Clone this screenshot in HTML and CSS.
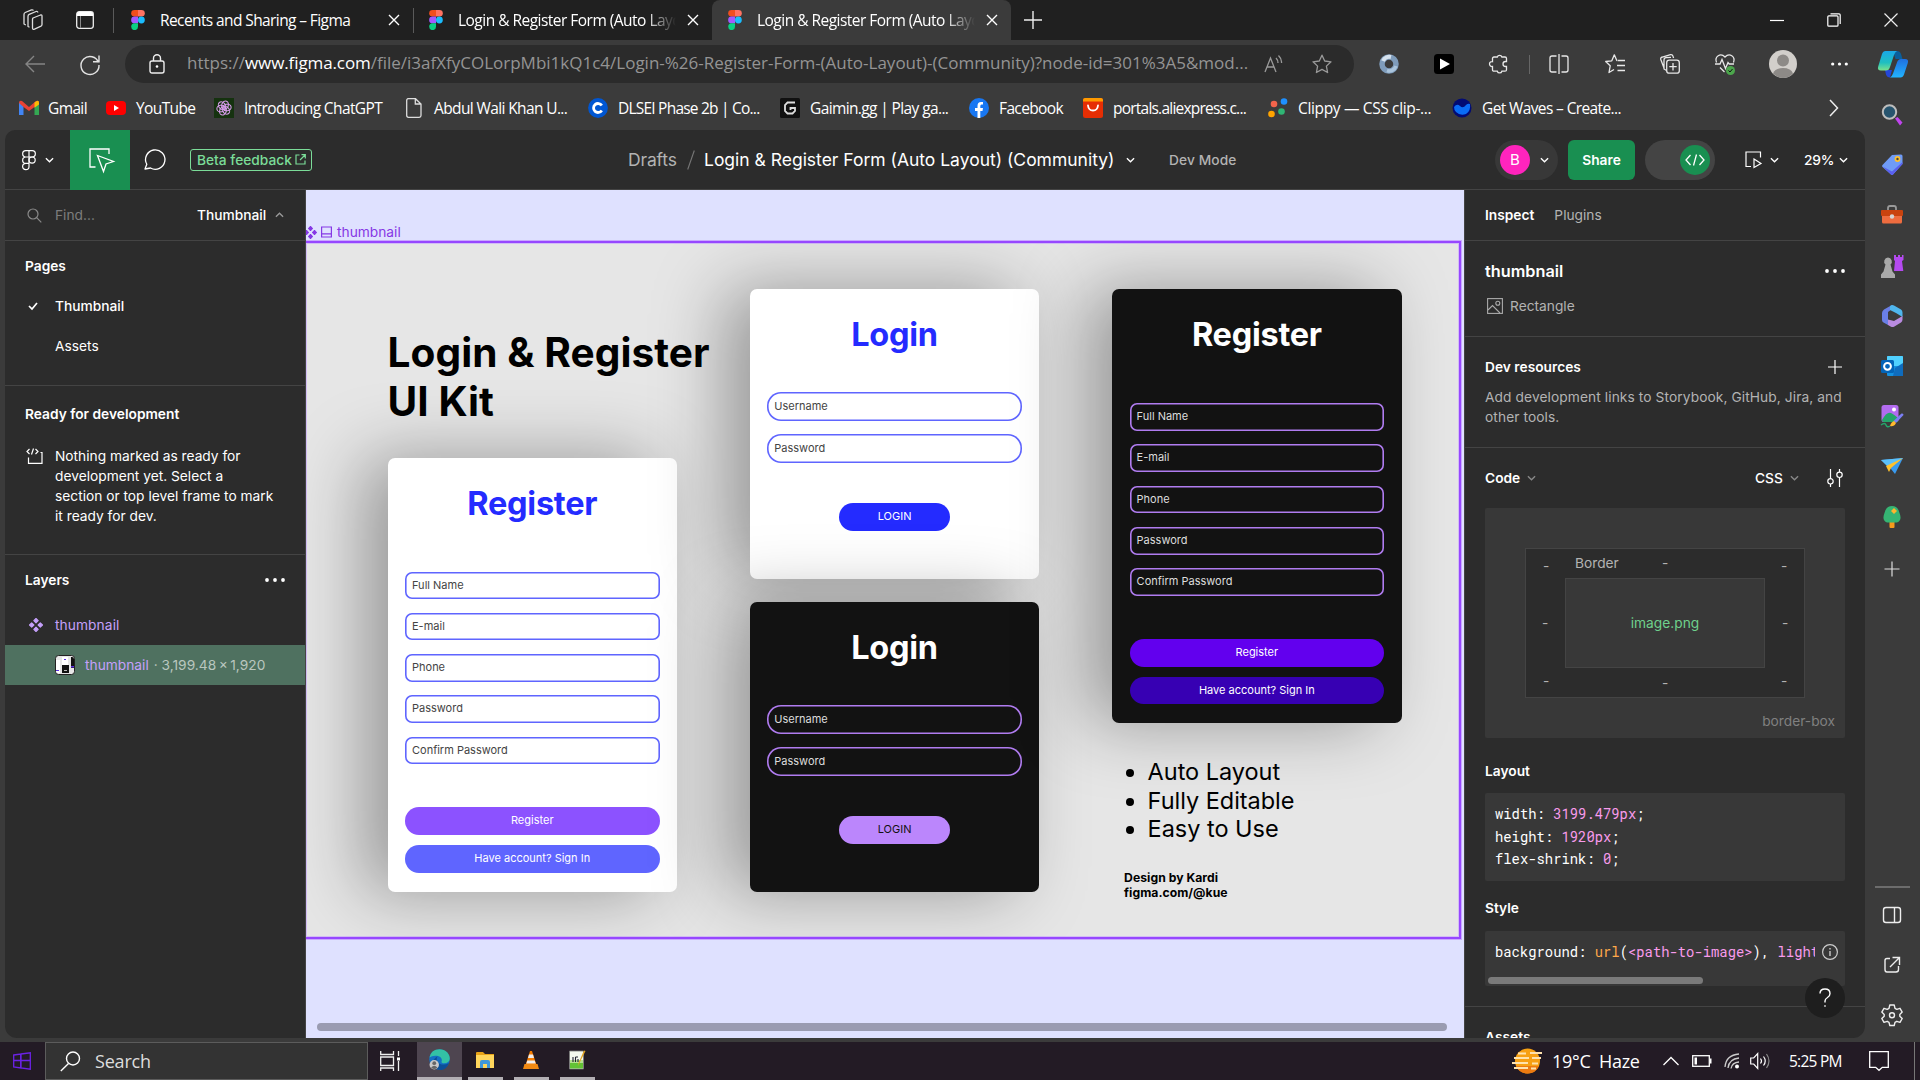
FILE: index.html
```html
<!DOCTYPE html>
<html lang="en">
<head>
<meta charset="utf-8">
<title>Login &amp; Register Form (Auto Layout) (Community) – Figma</title>
<link rel="stylesheet" href="styles.css">
</head>
<body>
<svg class="defs" width="0" height="0" aria-hidden="true">
  <symbol id="figma" viewBox="0 0 14 20"><path d="M3.500 0H7v6.600H3.500a3.300 3.300 0 0 1 0-6.600z" fill="#f24e1e"/><path d="M7 0h3.500a3.300 3.300 0 0 1 0 6.600H7z" fill="#ff7262"/><path d="M3.500 6.600H7v6.700H3.500a3.300 3.300 0 0 1 0-6.700z" fill="#a259ff"/><circle cx="10.400" cy="10" r="3.400" fill="#1abcfe"/><path d="M3.500 13.300H7v3.300a3.400 3.400 0 1 1-3.500-3.300z" fill="#0acf83"/></symbol>
  <symbol id="x" viewBox="0 0 12 12"><path d="M1 1l10 10M11 1L1 11" stroke="currentColor" stroke-width="1.400" fill="none"/></symbol>
  <symbol id="down" viewBox="0 0 10 6"><path d="M1 1l4 4 4-4" stroke="currentColor" stroke-width="1.500" fill="none"/></symbol>
  <symbol id="dots" viewBox="0 0 20 4"><circle cx="2" cy="2" r="1.900"/><circle cx="10" cy="2" r="1.900"/><circle cx="18" cy="2" r="1.900"/></symbol>
  <symbol id="comp" viewBox="0 0 14 14"><path d="M7 .5l2.200 2.200L7 4.900 4.800 2.700zM7 9.100l2.200 2.200L7 13.500l-2.200-2.200zM2.700 4.800L4.900 7 2.700 9.200.5 7zM11.300 4.800L13.500 7l-2.200 2.200L9.100 7z" fill="currentColor" stroke="currentColor" stroke-width="1.100" stroke-linejoin="round"/></symbol>
</svg>

<header class="tabstrip">
  <svg class="ic-work" viewBox="0 0 22 22"><g fill="none" stroke="#ddd" stroke-width="1.300" stroke-linejoin="round"><path d="M11 9l7.500-3q1.500-.4 1.500 1v8.500q0 1.200-1 1.700l-6.500 3q-2 .6-2-1.200v-8.500q0-1 .5-1.500z"/><path d="M7.500 18.300L6 17.500V7.500q0-1.500 1.200-2.100L14 2.500q1.500-.5 2 1M3.800 16L2 15V5.500Q2 4 3.200 3.500L9.500.9q1.300-.4 2 .6"/></g></svg>
  <svg class="ic-act" viewBox="0 0 18 18"><rect x=".7" y=".7" width="16.600" height="16.600" rx="2.500" fill="none" stroke="#eee" stroke-width="1.300"/><path d="M1 2.500Q1 1 2.500 1h13Q17 1 17 2.500V5H1z" fill="#fff"/><path d="M4.500 5v12" stroke="#888"/></svg>
  <i class="tabline"></i>
  <div class="tab t1"><svg class="fig"><use href="#figma"/></svg><span class="tt">Recents and Sharing – Figma</span><svg class="cx"><use href="#x"/></svg></div>
  <i class="tabline"></i>
  <div class="tab t2"><svg class="fig"><use href="#figma"/></svg><span class="tt fade">Login &amp; Register Form (Auto Layout)</span><svg class="cx"><use href="#x"/></svg></div>
  <div class="tab t3"><svg class="fig"><use href="#figma"/></svg><span class="tt fade">Login &amp; Register Form (Auto Layout)</span><svg class="cx"><use href="#x"/></svg></div>
  <svg class="newtab" viewBox="0 0 18 18"><path d="M9 0v18M0 9h18" stroke="#eee" stroke-width="1.400"/></svg>
  <div class="win">
    <svg width="14" height="14"><path d="M0 7.500h14" stroke="#fff" stroke-width="1.200"/></svg>
    <svg width="14" height="14" viewBox="0 0 14 14"><g fill="none" stroke="#fff" stroke-width="1.200"><rect x=".8" y="2.800" width="10.200" height="10.400" rx="1"/><path d="M3.500.8H12q1.200 0 1.200 1.200v9"/></g></svg>
    <svg width="14" height="14"><path d="M.5.5l13 13M13.500.5l-13 13" stroke="#eee" stroke-width="1.200"/></svg>
  </div>
</header>

<div class="toolbar">
  <svg class="back" viewBox="0 0 20 18"><path d="M20 9H1M9 1L1 9l8 8" fill="none" stroke="#858585" stroke-width="1.400"/></svg>
  <svg class="reload" viewBox="0 0 20 20"><path d="M18.500 8.500A9 9 0 1 0 19 11M19 1.500v6.200h-6" fill="none" stroke="#e4e4e4" stroke-width="1.400"/></svg>
  <div class="omni">
    <svg class="lock" viewBox="0 0 16 20"><rect x="1" y="7" width="14" height="12" rx="2" fill="none" stroke="#eee" stroke-width="1.400"/><path d="M4.500 7V4.300a3.500 3.500 0 0 1 7 0V7" fill="none" stroke="#eee" stroke-width="1.400"/><circle cx="8" cy="12.500" r="1.300" fill="#fff"/></svg>
    <span class="url">https://<b>www.figma.com</b>/file/i3afXfyCOLorpMbi1kQ1c4/Login-%26-Register-Form-(Auto-Layout)-(Community)?node-id=301%3A5&amp;mod...</span>
    <svg class="read" viewBox="0 0 20 20"><path d="M1 18L6.500 4 12 18M3 13h7M12 4q2 2 2 5M14.500 1.500Q18 5 17.500 9" fill="none" stroke="#9a9a9a" stroke-width="1.300"/></svg>
    <svg class="star" viewBox="0 0 20 20"><path d="M10 1.200l2.700 5.800 6.300.8-4.600 4.300 1.200 6.400L10 15.400l-5.600 3.100 1.200-6.400L1 7.800 7.300 7z" fill="none" stroke="#9a9a9a" stroke-width="1.300" stroke-linejoin="round"/></svg>
  </div>
  <div class="exts">
    <svg width="20" height="20" viewBox="0 0 20 20"><circle cx="10" cy="10" r="7" fill="none" stroke="#7f9cbb" stroke-width="5.500"/><path d="M4 7a7 7 0 0 1 8-4" fill="none" stroke="#d6e2ee" stroke-width="4"/><path d="M17 12a7 7 0 0 1-9 4.500" fill="none" stroke="#aac4dc" stroke-width="3.500"/></svg>
    <svg width="20" height="20" viewBox="0 0 20 20"><rect width="20" height="20" rx="3.500" fill="#000"/><path d="M6 4.500l10 5.500-10 5.500z" fill="#fff"/></svg>
    <svg width="20" height="20" viewBox="0 0 20 20"><path d="M5 3h3.300a2.400 2.400 0 0 1 4.600 0H16q1.500 0 1.500 1.500v3h-1a2.500 2.500 0 0 0 0 5h1v3.200q0 1.500-1.500 1.500h-3.100a2.400 2.400 0 0 1-4.600 0H5q-1.500 0-1.500-1.500v-3.200a2.500 2.500 0 1 1 0-4.900V4.500Q3.500 3 5 3z" fill="none" stroke="#e8e8e8" stroke-width="1.300"/></svg>
    <i class="vline"></i>
    <svg width="20" height="20" viewBox="0 0 20 20"><path d="M7.500 2H3Q1 2 1 4v12q0 2 2 2h4.500M12.500 2H17q2 0 2 2v12q0 2-2 2h-4.500M10 0v20" fill="none" stroke="#e8e8e8" stroke-width="1.300"/></svg>
    <svg width="20" height="20" viewBox="0 0 20 20"><path d="M12.500 6.500h-.7L9.300.8 6.800 6.800.7 7.500l4.500 4.300-1.200 6.700 5-3M13 6.500h7M12 11.500h8M12.500 16.500H20" fill="none" stroke="#e8e8e8" stroke-width="1.300" stroke-linejoin="round"/></svg>
    <svg width="20" height="20" viewBox="0 0 20 20"><g fill="none" stroke="#e8e8e8" stroke-width="1.300"><rect x="6.700" y="6.200" width="12.600" height="13" rx="2.500"/><path d="M13 9v7.500M9.300 12.700h7.400M4 14L.8 5.500Q.3 3.500 2.300 3L10.500.6Q12.500.3 13 2.200L13.600 4M6.500 16.500L4 15V6Q4 3.800 6 3.600l5-.2"/></g></svg>
    <svg width="20" height="20" viewBox="0 0 20 20"><path d="M9.500 18L5 13.500M1.500 8.500C-.8 2.500 5.500-1.800 10 3c4.500-4.800 10.800-.5 8.500 5.500M0 10h5l2-4.500 3.500 9 2.500-6 1.200 1.500H19" fill="none" stroke="#e8e8e8" stroke-width="1.300"/><circle cx="15.500" cy="16.500" r="4.500" fill="#4ca64c"/><path d="M13.500 16.500l1.500 1.500 2.500-3" stroke="#111" fill="none"/></svg>
    <svg width="28" height="28" viewBox="0 0 28 28"><circle cx="14" cy="14" r="14" fill="#d2cfcb"/><circle cx="14" cy="10.500" r="6" fill="#8d8a87"/><path d="M4 23.500q2-5.500 10-5.500t10 5.500q-4.300 4.500-10 4.500T4 23.500z" fill="#8d8a87"/></svg>
    <svg width="17" height="4" fill="#fff"><use href="#dots"/></svg>
    <svg width="30" height="27" viewBox="0 0 30 27"><defs><linearGradient id="cpa" x1="0" y1="0" x2="0" y2="1"><stop offset="0" stop-color="#1aa7e8"/><stop offset=".6" stop-color="#1fbfc0"/><stop offset="1" stop-color="#7be28b"/></linearGradient><linearGradient id="cpb" x1="0" y1="0" x2="0" y2="1"><stop offset="0" stop-color="#1f6fe0"/><stop offset="1" stop-color="#22b4ff"/></linearGradient></defs><path d="M15 0h4q3 0 4 3l1.500 5h-7z" fill="#0a5f9c"/><path d="M7 19h7l-2 7.500q-3 0-4-3z" fill="#2447d8"/><path d="M7.500 0H19q-2 1-3 4l-4 12q-1 3.500-4 3.500H3q-4 0-2.800-4L4 3q1-3 3.500-3z" fill="url(#cpa)"/><path d="M22.500 26.500H12q2-1 3-4l4-11q1-3.500 4-3.500h4q4 0 2.800 4L26 23.500q-1 3-3.500 3z" fill="url(#cpb)"/></svg>
  </div>
</div>

<nav class="marks">
  <a><svg viewBox="0 0 20 20"><path d="M0 4v13h4.500V8z" fill="#4285f4"/><path d="M20 4v13h-4.500V8z" fill="#34a853"/><path d="M0 5q0-3 3-2l7 6 7-6q3-1 3 2l-4.500 4L10 13 4.500 9z" fill="#ea4335"/><path d="M15.500 4.500Q20 1 20 5v1.500l-4.500 3.200z" fill="#fbbc04"/></svg><span>Gmail</span></a>
  <a><svg viewBox="0 0 20 20"><rect y="3" width="20" height="14" rx="4" fill="#f00"/><path d="M8 7l5 3-5 3z" fill="#fff"/></svg><span>YouTube</span></a>
  <a><svg viewBox="0 0 20 20"><rect width="20" height="20" fill="#15320f"/><g fill="none" stroke="#d59be8" stroke-width="1.100"><ellipse cx="10" cy="7" rx="3.300" ry="4.200" transform="rotate(20 10 10)"/><ellipse cx="10" cy="7" rx="3.300" ry="4.200" transform="rotate(80 10 10)"/><ellipse cx="10" cy="7" rx="3.300" ry="4.200" transform="rotate(140 10 10)"/><ellipse cx="10" cy="7" rx="3.300" ry="4.200" transform="rotate(200 10 10)"/><ellipse cx="10" cy="7" rx="3.300" ry="4.200" transform="rotate(260 10 10)"/><ellipse cx="10" cy="7" rx="3.300" ry="4.200" transform="rotate(320 10 10)"/></g></svg><span>Introducing ChatGPT</span></a>
  <a><svg viewBox="0 0 20 20"><path d="M3.500.7h8L17 6v11.500q0 1.800-1.800 1.800H4.500q-1.800 0-1.800-1.800V2.500Q2.700.7 4.500.7M11.300.8V6H17" fill="none" stroke="#ddd" stroke-width="1.300"/></svg><span>Abdul Wali Khan U...</span></a>
  <a><svg viewBox="0 0 20 20"><circle cx="10" cy="10" r="9.900" fill="#0056d2"/><path d="M13.800 7.500a4.500 4.500 0 1 0 0 5" fill="none" stroke="#fff" stroke-width="2.800"/></svg><span class="narrow">DLSEI Phase 2b | Co...</span></a>
  <a><svg viewBox="0 0 20 20"><rect width="20" height="20" rx="1.500" fill="#111"/><path d="M15 4.500H7.500L5 7v6l2.500 2.500h5L15 13v-3h-4.500v2" fill="none" stroke="#ddd" stroke-width="1.800"/></svg><span>Gaimin.gg | Play ga...</span></a>
  <a><svg viewBox="0 0 20 20"><circle cx="10" cy="10" r="10" fill="#1877f2"/><path d="M8.500 20v-7H6v-3h2.500V8q0-4 3.500-4h2v2.500h-1.500Q11.300 6.500 11.300 8v2H14l-.5 3h-2.200v7z" fill="#fff"/></svg><span>Facebook</span></a>
  <a><svg viewBox="0 0 20 20"><rect width="20" height="20" rx="2.500" fill="#e62e04"/><path d="M0 3.500V2q0-2 2-2h16q2 0 2 2v1.500z" fill="#ff9a00"/><path d="M5 7.500q.5 5 5 5t5-5" fill="none" stroke="#fff" stroke-width="1.800" stroke-linecap="round"/></svg><span class="narrow">portals.aliexpress.c...</span></a>
  <a><svg viewBox="0 0 20 20"><circle cx="6" cy="6" r="3.300" fill="#f2644b"/><circle cx="3.500" cy="16" r="3.300" fill="#ffa400"/><circle cx="16" cy="3.500" r="3.300" fill="#1e90ff"/><circle cx="13.500" cy="13.500" r="3.300" fill="#2fb574"/></svg><span class="wide">Clippy — CSS clip-...</span></a>
  <a><svg viewBox="0 0 20 20"><circle cx="10" cy="10" r="9.500" fill="#020b73"/><path d="M2 9q3-4 6-1t6-1q2-2 4-1 1 7-4 10-6 2-10-2-2-2-2-5z" fill="#0a6cf5"/></svg><span>Get Waves – Create...</span></a>
  <svg class="more" width="10" height="18" viewBox="0 0 10 18"><path d="M1 1l7.500 8L1 17" fill="none" stroke="#eee" stroke-width="1.500"/></svg>
</nav>

<main class="middle">
<section class="app">
  <div class="head">
    <svg class="flogo" viewBox="0 0 14 20" fill="none" stroke="#fff" stroke-width="1.200"><path d="M7 .7v15.800a3.200 3.200 0 1 1-3.200-3.200H7M7 .7H3.800a3.100 3.100 0 0 0 0 6.300H7M7 .7h3.200a3.100 3.100 0 0 1 0 6.300H7M7 7H3.800a3.100 3.100 0 0 0 0 6.300"/><circle cx="10.100" cy="10.100" r="3.100"/></svg>
    <svg class="ch"><use href="#down"/></svg>
    <div class="move"><svg width="26" height="26" viewBox="0 0 26 26" fill="none" stroke="#fff" stroke-width="1.300"><path d="M6.500 19H1V1h19v5"/><path d="M8.500 7.500l16 6-7.500 2.500-2.500 7.500z"/></svg></div>
    <svg class="cmt" viewBox="0 0 22 21"><path d="M1 20l1.800-4.700A9.700 9.700 0 1 1 6.500 19z" fill="none" stroke="#fff" stroke-width="1.300" stroke-linejoin="round"/></svg>
    <div class="beta"><span>Beta feedback</span><svg width="11" height="11" viewBox="0 0 11 11"><path d="M4.500 1H1v9h9V6.500M6.500.7h3.800v3.800M10 1L5 6" fill="none" stroke="#7bdc98" stroke-width="1.200"/></svg></div>
    <span class="drafts">Drafts</span><svg class="slash" viewBox="0 0 8 20"><path d="M7.300.5L.7 19.500" stroke="#777" stroke-width="1.100"/></svg>
    <span class="fname">Login &amp; Register Form (Auto Layout) (Community)</span><svg class="ch"><use href="#down"/></svg>
    <span class="devm">Dev Mode</span>
    <div class="user"><i>B</i><svg class="ch"><use href="#down"/></svg></div>
    <span class="share">Share</span>
    <div class="toggle"><i><svg width="20" height="12" viewBox="0 0 20 12"><path d="M5.500 1L1 6l4.500 5M14.500 1L19 6l-4.500 5M11.500.5l-3 11" fill="none" stroke="#fff" stroke-width="1.300"/></svg></i></div>
    <svg class="present" viewBox="0 0 17 17"><path d="M6 15.500H1V1h14.500v5.500M9 8l7 4.500L9 16.500z" fill="none" stroke="#fff" stroke-width="1.200"/></svg><svg class="ch"><use href="#down"/></svg>
    <span class="pct">29%</span><svg class="ch"><use href="#down"/></svg>
  </div>
  <div class="cols">
    <aside class="left">
      <div class="find"><svg width="15" height="15" viewBox="0 0 15 15"><circle cx="6" cy="6" r="5" fill="none" stroke="#8a8a8a" stroke-width="1.200"/><path d="M9.700 9.700l4.600 4.600" stroke="#8a8a8a" stroke-width="1.200"/></svg><span class="ph">Find...</span><span class="pg">Thumbnail</span><svg class="up"><use href="#down"/></svg></div>
      <div class="sec pages">
        <h4>Pages</h4>
        <div class="row cur"><svg class="tick" viewBox="0 0 10 8"><path d="M1 4l3 3 5-6" fill="none" stroke="#fff" stroke-width="1.700"/></svg>Thumbnail</div>
        <div class="row">Assets</div>
      </div>
      <div class="sec ready">
        <h4>Ready for development</h4>
        <div class="note"><svg width="18" height="16" viewBox="0 0 18 16" fill="none" stroke="#fff" stroke-width="1.200"><path d="M3.500 1L1 3.500 3.500 6M7.500.5L5.500 6.500M9.500 1L12 3.500 9.500 6"/><path d="M2.500 9.500v5.800h13.500V4.500h-1.500" /></svg><p>Nothing marked as ready for<br>development yet. Select a<br>section or top level frame to mark<br>it ready for dev.</p></div>
      </div>
      <div class="layers">
        <h4>Layers<svg width="20" height="4" fill="#fff"><use href="#dots"/></svg></h4>
        <div class="row comp"><svg class="cmp"><use href="#comp"/></svg>thumbnail</div>
        <div class="row sel"><svg class="thumb" viewBox="0 0 20 20"><rect x=".5" y=".5" width="19" height="19" rx="3" fill="#e6e6e6" stroke="#222"/><path d="M1 5h4v13H3q-2 0-2-2zM7 2h6v8H7z" fill="#fff"/><path d="M7 10h7v8H7zM16 2h1q2 0 2 2v9h-3z" fill="#111"/><path d="M16 11h3v1.500h-3zM1 15h3v1H1zM9 4h2v1H9z" fill="#5b2be0"/><path d="M9 15h3v1H9z" fill="#bbb"/></svg><span>thumbnail</span><em>·&nbsp;3,199.48&#8201;×&#8201;1,920</em></div>
      </div>
    </aside>

    <div class="canvas">
      <div class="flabel"><svg class="cmp"><use href="#comp"/></svg><svg width="11" height="12" viewBox="0 0 11 12"><path d="M.6 1h9.800v10H.6zM.6 7.800h9.800" fill="none" stroke="currentColor" stroke-width="1.200"/></svg><span>thumbnail</span></div>
      <div class="frame">
        <div class="c1">
          <h1>Login &amp; Register<br>UI Kit</h1>
          <div class="card reg">
            <h2>Register</h2>
            <div class="fields"><p>Full Name</p><p>E-mail</p><p>Phone</p><p>Password</p><p>Confirm Password</p></div>
            <div class="btns"><b>Register</b><b>Have account? Sign In</b></div>
          </div>
        </div>
        <div class="c2">
          <div class="card log"><h2>Login</h2><div class="fields"><p>Username</p><p>Password</p></div><b class="go">LOGIN</b></div>
          <div class="card log dark"><h2>Login</h2><div class="fields"><p>Username</p><p>Password</p></div><b class="go">LOGIN</b></div>
        </div>
        <div class="c3">
          <div class="card reg dark">
            <h2>Register</h2>
            <div class="fields"><p>Full Name</p><p>E-mail</p><p>Phone</p><p>Password</p><p>Confirm Password</p></div>
            <div class="btns"><b>Register</b><b>Have account? Sign In</b></div>
          </div>
          <ul><li>Auto Layout</li><li>Fully Editable</li><li>Easy to Use</li></ul>
          <div class="credit">Design by Kardi<br>figma.com/@kue</div>
        </div>
      </div>
      <i class="hscroll"></i>
    </div>

    <aside class="right">
      <div class="tabs"><b>Inspect</b><span>Plugins</span></div>
      <div class="obj"><div class="oname"><b>thumbnail</b><svg width="20" height="4" fill="#fff"><use href="#dots"/></svg></div>
        <div class="otype"><svg width="16" height="16" viewBox="0 0 16 16" fill="none" stroke="#aaa" stroke-width="1.100"><rect x=".6" y=".6" width="14.800" height="14.800"/><path d="M1 12l4.500-4.500 7.500 7.500"/><circle cx="10.800" cy="5.200" r="2"/></svg>Rectangle</div></div>
      <div class="devres"><h4>Dev resources<svg width="14" height="14" viewBox="0 0 14 14"><path d="M7 0v14M0 7h14" stroke="#fff" stroke-width="1.200"/></svg></h4><p>Add development links to Storybook, GitHub, Jira, and<br>other tools.</p></div>
      <div class="code">
        <div class="chead"><b>Code</b><svg class="ch"><use href="#down"/></svg><span>CSS</span><svg class="ch"><use href="#down"/></svg><svg class="sld" width="16" height="18" viewBox="0 0 16 18" fill="none" stroke="#fff" stroke-width="1.200"><path d="M3.500 0v9.500M3.500 15v3M12.500 0v3M12.500 8.500V18"/><circle cx="3.500" cy="12.300" r="2.700"/><circle cx="12.500" cy="5.800" r="2.700"/></svg></div>
        <div class="boxm">
          <div class="border"><div class="inner">image.png</div><span class="bl">Border</span><i class="d1">-</i><i class="d2">-</i><i class="d3">-</i><i class="d4">-</i><i class="d5">-</i><i class="d6">-</i><i class="d7">-</i><i class="d8">-</i></div>
          <span class="bb">border-box</span>
        </div>
        <h4>Layout</h4>
        <pre class="blk">width: <i>3199.479px</i>;
height: <i>1920px</i>;
flex-shrink: <i>0</i>;</pre>
        <h4 class="st">Style</h4>
        <div class="blk2"><pre>background: <u>url</u>(<i>&lt;path-to-image&gt;</i>), <i>lightgray</i></pre><svg width="18" height="18" viewBox="0 0 18 18"><circle cx="9" cy="9" r="7.400" fill="none" stroke="#ccc" stroke-width="1.200"/><path d="M9 8v5M9 5v1.500" stroke="#ccc" stroke-width="1.400"/></svg><i class="sb"></i></div>
      </div>
      <div class="assets"><h4>Assets</h4></div>
      <div class="help"><svg width="12" height="20" viewBox="0 0 12 20"><path d="M1 5.500Q1 1 6 1t5 4.500Q11 8 8.500 9.500T6 13v1.500M6 17.300v1.500" fill="none" stroke="#fff" stroke-width="1.400"/></svg></div>
    </aside>
  </div>
</section>

<aside class="edgebar">
  <svg viewBox="0 0 24 24"><circle cx="9.500" cy="9" r="6.700" fill="#27546e" stroke="#bdbdbd" stroke-width="2"/><path d="M15 15.500l2.500-1.500 5 5.500-2.500 3z" fill="#c044ee"/></svg>
  <svg viewBox="0 0 24 24"><path d="M12 2l9-.5q1.500 0 1.500 1.500v8L13 21.500q-1 1-2 0L2.500 14q-1-1 0-2z" fill="#6f9bf7"/><path d="M2.500 13.500l8.500 8q1 1 2 0l9.500-10.500V9L12 18.500z" fill="#5a5ff0"/><circle cx="17.500" cy="6" r="2.900" fill="#ffc02e"/><circle cx="17.500" cy="6" r="1.200" fill="#444"/></svg>
  <svg viewBox="0 0 24 24"><path d="M8 7V5q0-2 2-2h4q2 0 2 2v2" fill="none" stroke="#999" stroke-width="1.800"/><path d="M2 12h20v7q0 1.500-1.500 1.500h-17Q2 20.500 2 19z" fill="#ee6c3f"/><rect x="1" y="7" width="22" height="6" rx="1" fill="#c9430f"/><circle cx="12" cy="13.500" r="2.200" fill="#d5d5d5"/></svg>
  <svg viewBox="0 0 24 24"><path d="M14 1h2v2h2V1h2v2h2V1h1.500v5L22 7l1.300 10H14l1-10-1-1z" fill="#b44af0"/><path d="M8 3.500a4 4 0 0 1 2.500 7l2 7 2.500 3V24H1v-3.500l2.500-3 2-7A4 4 0 0 1 8 3.500z" fill="#a9a9a9"/></svg>
  <svg viewBox="0 0 24 24"><path d="M12 1L4 5.500Q2 7 2 9v7q0 1.500 1.500 2.500L8 21V8l6-4.500z" fill="#6a7fe6"/><path d="M12 1q1.500 0 2.500.7L21 5.500q1.500 1 1.500 3V13L16 9l-6-3V2z" fill="#4fb6ee"/><path d="M8 15.500V21l3 1.700q1.500.8 3 0L21 18.500q1.500-1 1.500-3V12L14 17z" fill="#b98be0"/><circle cx="12" cy="12" r="3.800" fill="#3b3b3b"/></svg>
  <svg viewBox="0 0 24 24"><rect x="7" y="2" width="16" height="20" rx="1" fill="#1490df"/><path d="M7 3q0-1 1-1h14q1 0 1 1v9H7z" fill="#50d1ff"/><path d="M15 14l8-5v13H13z" fill="#0f6cbd"/><rect x="1" y="6" width="13" height="13" rx="1.500" fill="#0364b8"/><circle cx="7.500" cy="12.300" r="3.400" fill="none" stroke="#fff" stroke-width="2"/></svg>
  <svg viewBox="0 0 24 24"><rect x="1.500" y="1" width="17" height="17" rx="2.500" fill="#b36cf0"/><path d="M2 16q5-9 9-7t7 5v4H4q-2 0-2-2z" fill="#25a56a"/><circle cx="14" cy="5.500" r="2" fill="#fff"/><path d="M21.500 9.500q2-.5 2 1.500L16 19l-2.500-2z" fill="#7b7ff5"/><path d="M14 17l2 2q-2 4-6 3 1-4 4-5z" fill="#ffb92e"/><path d="M1 21q4-3 5 0t4 1" stroke="#25a56a" stroke-width="1.500" fill="none"/></svg>
  <svg viewBox="0 0 24 24"><path d="M1 6l22-2-8 16-4-5z" fill="#3a9bf0"/><path d="M1 6l22-2-15 9z" fill="#5cc1fa"/><path d="M23 4L6 12l3 6 2-4z" fill="#ffc22d"/></svg>
  <svg viewBox="0 0 24 24"><rect x="9.500" y="16" width="5" height="7" rx="1" fill="#f59b1c"/><path d="M12 1q6 0 7.500 7 3 7-2.500 9.500H7Q1.500 15 4.500 8 6 1 12 1z" fill="#35b573"/><path d="M14 3l1.500 1.500L17 6l-1.500 1.500L14 9l-1.500-1.500L11 6l1.500-1.500z" fill="#ffb52e"/></svg>
  <svg class="add" viewBox="0 0 24 24"><path d="M12 4.500v15M4.500 12h15" stroke="#ddd" stroke-width="1.200"/></svg>
  <i></i>
  <svg viewBox="0 0 24 24" fill="none" stroke="#eee" stroke-width="1.400"><rect x="3.500" y="4.500" width="17" height="15" rx="2.500"/><path d="M14.500 4.500v15"/></svg>
  <svg viewBox="0 0 24 24" fill="none" stroke="#eee" stroke-width="1.400"><path d="M10 5.500H7Q5 5.500 5 7.500v9q0 2.500 2 2.500h9q2.500 0 2.500-2.500V13M12.500 4.500h7V12M19 5l-9 9"/></svg>
  <svg viewBox="0 0 24 24" fill="none" stroke="#eee" stroke-width="1.400"><path d="M9.800 2h4.400l.8 3.300 1.800 1 3.200-1 2.200 3.800-2.400 2.300v1.800l2.400 2.300-2.200 3.800-3.200-1-1.800 1-.8 3.200H9.800L9 19.300l-1.800-1-3.200 1-2.200-3.800 2.400-2.300v-1.800L1.800 9.100 4 5.300l3.200 1 1.800-1z" stroke-linejoin="round"/><circle cx="12" cy="12.300" r="2.500"/></svg>
</aside>
</main>

<footer class="taskbar">
  <svg class="start" viewBox="0 0 18 18"><path d="M.7 3l7-1v6.500h-7zM8 2L17.300.8v7.700H8zM.7 8.500h7V16l-7-1zM8 8.500h9.300v8.700L8 16z" fill="none" stroke="#6c22e6" stroke-width="1.300"/></svg>
  <div class="srch"><svg width="21" height="21" viewBox="0 0 21 21"><circle cx="13" cy="7.500" r="6.500" fill="none" stroke="#fff" stroke-width="1.400"/><path d="M8.500 12.500L.8 20" stroke="#fff" stroke-width="1.400"/></svg><span>Search</span></div>
  <svg class="tv" viewBox="0 0 20 20" fill="none" stroke="#eee" stroke-width="1.300"><path d="M.7 0v3.500h12.800V0M.7 6h12.800v8.500H.7zM.7 20v-3h12.800v3M18.500 0v5M18.500 10v10"/><path d="M17 6.500h3v3h-3z" fill="#fff" stroke="none"/></svg>
  <div class="app1 on"><svg width="21" height="21" viewBox="0 0 20 20"><circle cx="10" cy="10" r="9.800" fill="#1470c4"/><path d="M.5 8Q2 .3 10 .2c6 0 10 4.500 9.800 9-.3 3-3 4.800-6.500 4.300-2-.5-1.300-1.500-1-3Q11.500 7 7.500 6.500 3 6 .5 8z" fill="#33c1a5"/><path d="M19 13q-4 3-9 1-4-3-2-7-5 3-4 8 2 5 8 5 5-1 7-7z" fill="#0c4f98"/><circle cx="5" cy="15" r="4.500" fill="#c8c8c8"/><circle cx="5" cy="13.500" r="1.800" fill="#666"/><path d="M2 17.500q3-3 6 0-3 3-6 0z" fill="#666"/></svg></div>
  <div class="app1"><svg width="20" height="20" viewBox="0 0 20 20"><path d="M1 3q0-1 1-1h6l2 2h9v5H1z" fill="#e8a317"/><rect x="1" y="5" width="18" height="13" fill="#ffd65c"/><path d="M5 18v-6q0-2 2-2h6q2 0 2 2v6h-3v-4H8v4z" fill="#3f97db"/></svg></div>
  <div class="app1"><svg width="20" height="20" viewBox="0 0 20 20"><path d="M9 1h2l4.500 14h-11z" fill="#f57c00"/><path d="M8 4.500h4l1 3.500H7zM6.300 10.500h7.400l1 3H5.300z" fill="#eee"/><path d="M3.500 14h13l1.500 5H2z" fill="#f28a12"/></svg></div>
  <div class="app1"><svg width="20" height="20" viewBox="0 0 20 20"><path d="M2.500 1h14v18h-14z" fill="#f4f8ee" stroke="#777" stroke-width=".8"/><path d="M3 12h13v6.500H3z" fill="#63c235"/><path d="M3 10h13v3H3z" fill="#b5e08f"/><path d="M6 7v5M8.500 7v5M11 9v3M8.500 7h2.500" stroke="#223" stroke-width="1.100"/><path d="M18.500 1L12 14l-1 2 .5-3L17 .5z" fill="#e2a321"/></svg></div>
  <div class="tray">
    <svg class="sun" viewBox="0 0 30 28"><circle cx="15.500" cy="14" r="12.500" fill="#f7a013"/><path d="M4 19a12.500 12.500 0 0 0 23 0z" fill="#ec7a10"/><path d="M6 6.500h8M18 6h12M2 11h15M20 11h9M0 16h16M20 16.500h6M2 21h14M19 21.500h5" stroke="#ffe2ad" stroke-width="2"/></svg>
    <span class="temp">19°C</span><span class="haze">Haze</span>
    <svg class="tc" viewBox="0 0 16 10"><path d="M.5 9L8 1.500 15.500 9" fill="none" stroke="#fff" stroke-width="1.300"/></svg>
    <svg class="bat" viewBox="0 0 20 12"><rect x=".7" y=".7" width="16.600" height="10.600" fill="none" stroke="#fff" stroke-width="1.300"/><path d="M2.500 2.500h2.500v7H2.500zM18 3.500h1.500v5H18z" fill="#fff"/></svg>
    <svg class="wifi" viewBox="0 0 16 16" fill="none" stroke="#ccc" stroke-width="1.300"><path d="M1 14Q2 2 15 1M4 15Q5 6 15 5M7 15.500Q8 9.500 15 9"/><circle cx="13" cy="13.500" r="2" fill="#fff" stroke="none"/></svg>
    <svg class="vol" viewBox="0 0 21 18" fill="none" stroke="#fff" stroke-width="1.200"><path d="M.7 6h3l4-4.500v15L3.700 12h-3zM10.500 6.500q2 2.500 0 5M13.500 4.500q3.500 4.500 0 9"/><path d="M16.500 2q5 7 0 14" stroke="#888"/></svg>
    <span class="time">5:25 PM</span>
    <svg class="act" viewBox="0 0 20 20"><path d="M.7.7h18.600v15.600h-6L10 19.300l-3.300-3H.7z" fill="none" stroke="#fff" stroke-width="1.300"/></svg>
    <i class="pk"></i>
  </div>
</footer>
</body>
</html>
```
FILE: styles.css
```css
* { box-sizing: border-box; }
html, body { margin: 0; height: 100%; }
body { width: 1920px; height: 1080px; overflow: hidden; background: #3b3b3b; color: #fff; font-family: "Open Sans", "Noto Sans", sans-serif; display: flex; flex-direction: column; }
h1, h2, h4, p, ul, pre { margin: 0; padding: 0; }
i, em { font-style: normal; }
svg { display: block; flex: none; overflow: visible; }
.defs { position: absolute; }

/* browser tabs */
.tabstrip { height: 40px; flex: none; background: #202020; display: flex; align-items: center; font-size: 15.500px; }
.ic-work { width: 22px; height: 22px; margin-left: 22px; }
.ic-act { width: 18px; height: 18px; margin: 0 19px 0 32px; }
.tabline { width: 1px; height: 25px; background: #5a5a5a; }
.tab { height: 40px; display: flex; align-items: center; position: relative; }
.t1 { width: 299px; padding-left: 17px; }
.t2 { width: 298px; padding-left: 15px; }
.t3 { width: 299px; padding-left: 16px; background: #3b3b3b; border-radius: 8px 8px 0 0; }
.fig { width: 14px; height: 20px; margin-right: 15px; }
.t1 .tt { width: 224px; letter-spacing: -.6px; }
.tt { width: 218px; white-space: nowrap; overflow: hidden; letter-spacing: -.52px; line-height: 24px; }
.t2 .cx, .t3 .cx { margin-left: 11px; }
.fade { -webkit-mask-image: linear-gradient(90deg, #000 86%, transparent); mask-image: linear-gradient(90deg, #000 86%, transparent); }
.cx { width: 12px; height: 12px; margin-left: 4px; }
.newtab { width: 18px; height: 18px; margin-left: 13px; }
.win { margin-left: auto; margin-right: 22px; display: flex; gap: 43px; }

/* address bar */
.toolbar { height: 48px; flex: none; display: flex; align-items: center; }
.back { width: 20px; height: 18px; margin-left: 25px; }
.reload { width: 20px; height: 20px; margin: 0 25px 0 35px; }
.omni { width: 1229px; height: 38px; border-radius: 19px; background: #2b2b2b; display: flex; align-items: center; padding-left: 24px; }
.lock { width: 16px; height: 20px; margin-right: 22px; }
.url { width: 1077px; white-space: nowrap; font-size: 17px; line-height: 24px; padding-bottom: 2px; color: #949494; }
.url b { font-weight: 400; color: #fff; letter-spacing: -.1px; }
.read { width: 20px; height: 20px; margin-right: 28px; }
.star { width: 20px; height: 20px; }
.exts { display: grid; grid-template-columns: 55px 55px 55px 7px 51px 61px 49px 61px 55px 59px 47px; align-items: center; justify-items: center; margin-left: 7px; }
.vline { width: 1px; height: 19px; background: #666; }

/* bookmarks */
.marks { height: 42px; flex: none; display: grid; grid-template-columns: 87px 108px 190px 184px 192px 189px 114px 185px 184px 377px 20px; padding: 0 0 2px 19px; align-items: center; font-size: 15.500px; letter-spacing: -.62px; }
.marks a { display: flex; align-items: center; gap: 10px; white-space: nowrap; }
.marks a svg { width: 20px; height: 20px; }
.marks a:first-child { gap: 9px; }
.narrow { letter-spacing: -.78px; }
.wide { letter-spacing: -.35px; }

/* figma window */
.middle { flex: none; height: 912px; display: flex; }
.app { width: 1860px; height: 908px; margin-left: 5px; background: #2c2c2c; border-radius: 10px 10px 12px 12px; overflow: hidden; font-family: Inter, sans-serif; font-size: 13.750px; display: flex; flex-direction: column; }
.head { height: 60px; flex: none; border-bottom: 1px solid #444; display: flex; align-items: center; white-space: nowrap; }
.ch { width: 9px; height: 6px; }
.flogo { width: 14px; height: 20px; margin: 0 9px 0 17px; }
.move { width: 60px; height: 60px; background: #198f51; margin: 0 14px 0 16px; display: flex; align-items: center; justify-content: center; padding: 2px 0 0 3px; }
.cmt { width: 22px; height: 21px; margin-right: 24px; }
.beta { width: 122px; height: 22px; border: 1px solid #7bdc98; border-radius: 3px; color: #7bdc98; display: flex; align-items: center; justify-content: space-between; padding: 0 5px 0 6px; font-weight: 500; }
.drafts { width: 59px; margin-left: 316px; color: #b3b3b3; font-size: 17.500px; letter-spacing: -.15px; }
.slash { width: 8px; height: 20px; margin-right: 9px; }
.fname { width: 422px; font-size: 17.500px; letter-spacing: -.01px; }
.devm { width: 67px; margin: 0 259px 0 34px; color: #b3b3b3; font-weight: 500; letter-spacing: .1px; }
.user { width: 63px; height: 40px; border-radius: 20px; background: #383838; display: flex; align-items: center; padding-left: 5px; gap: 10px; }
.user i, .toggle i { width: 30px; height: 30px; border-radius: 50%; background: #ff24bd; display: flex; align-items: center; justify-content: center; font-size: 15px; }
.share { width: 67px; height: 40px; border-radius: 6px; background: #198f51; font-weight: 600; margin: 0 10px; line-height: 40px; text-align: center; }
.toggle { width: 70px; height: 40px; border-radius: 20px; background: #444; padding: 5px 5px 0 35px; margin-right: 30px; }
.toggle i { background: #198f51; }
.present { width: 17px; height: 17px; margin-right: 8px; }
.pct { width: 35px; margin-left: 25px; font-weight: 500; letter-spacing: -.2px; }
.cols { flex: 1; min-height: 0; display: flex; }

/* left panel */
.left { width: 301px; border-right: 1px solid #444; }
h4 { font-size: 13.750px; font-weight: 600; }
.find { height: 51px; border-bottom: 1px solid #444; display: flex; align-items: center; padding-left: 22px; }
.ph { width: 142px; margin-left: 13px; color: #7d7d7d; }
.pg { width: 78px; font-weight: 500; }
.up { width: 9px; height: 6px; transform: rotate(180deg); color: #999; }
.sec { border-bottom: 1px solid #444; }
.left h4 { height: 40px; line-height: 40px; padding-left: 20px; }
.pages { height: 145px; padding-top: 5px; }
.row { height: 40px; display: flex; align-items: center; padding-left: 50px; position: relative; }
.cur { font-weight: 500; }
.tick { width: 10px; height: 8px; position: absolute; left: 23px; top: 16px; }
.ready { height: 169px; padding-top: 8px; }
.note { display: flex; padding: 12px 0 0 21px; line-height: 20px; }
.note svg { margin: 2px 11px 0 0; }
.layers { padding-top: 5px; }
.layers h4 { display: flex; align-items: center; justify-content: space-between; padding-right: 20px; margin-bottom: 5px; }
.comp { color: #c5a0fb; letter-spacing: .08px; }
.comp .cmp { width: 14px; height: 14px; position: absolute; left: 24px; top: 13px; }
.sel { background: #4f7160; color: #c5a0fb; }
.thumb { width: 20px; height: 20px; margin-right: 10px; }
.sel em { color: #b9c6bf; margin-left: 5px; }

/* canvas */
.canvas { width: 1158px; background: #dfe1ff; overflow: hidden; display: flex; flex-direction: column; }
.flabel { height: 51px; flex: none; display: flex; align-items: flex-end; color: #8638e5; }
.flabel .cmp { width: 13px; height: 13px; margin: 0 4px 2px -2px; }
.flabel svg { margin-bottom: 3px; }
.flabel span { margin-left: 5px; line-height: 17px; }
.frame { width: 1155px; height: 698px; flex: none; border: 2px solid #9747ff; border-left: 0; background: #e6e6e6; box-shadow: 0 0 0 1px #c9a9ff, inset 0 0 0 1px #d2bdf5; display: flex; color: #000; padding-left: 81.500px; overflow: hidden; }
.c1, .c2 { width: 362.300px; }
.c1 { padding-top: 85px; }
h1 { font-size: 40.600px; line-height: 49.300px; letter-spacing: .07px; white-space: nowrap; height: 129.500px; }
.c2 { padding-top: 46px; }
.c2 .card + .card { margin-top: 23.500px; }
.c3 { padding-top: 46px; }
.card { width: 289.500px; border-radius: 7px; background: #fff; box-shadow: -25px 0 70px rgba(0, 0, 0, .34); padding: 0 17.500px; position: relative; }
.reg { height: 434.300px; }
.log { height: 289.500px; }
.card h2 { font-size: 32.500px; line-height: 40px; padding-top: 26px; text-align: center; color: #242bff; letter-spacing: -.27px; }
.fields { display: flex; flex-direction: column; gap: 13.600px; padding-top: 48px; }
.fields p { height: 27.700px; box-shadow: inset 0 0 0 1.600px #5f65ff; border-radius: 7px; font-size: 11px; line-height: 27.500px; padding-left: 7px; color: #444; }
.log .fields { padding-top: 37px; }
.log .fields p { height: 28.600px; border-radius: 14px; line-height: 28.500px; }
.btns { padding-top: 43px; display: flex; flex-direction: column; gap: 10.300px; }
.btns b, .go { height: 27.700px; border-radius: 14px; font-size: 11px; font-weight: 400; line-height: 27.500px; text-align: center; color: #fff; background: #8c52ff; }
.btns b + b { background: #5f65ff; }
.go { display: block; width: 111px; margin: 40.500px auto 0; background: #242bff; }
.dark { background: #121212; }
.dark h2 { color: #fff; }
.dark .fields p { color: #ddd; box-shadow: inset 0 0 0 1.600px #b07cf0; }
.dark .btns b { background: #6200ee; }
.dark .btns b + b { background: #3700b3; }
.dark .go { background: #bb86fc; color: #121212; }
.c3 ul { list-style: none; font-size: 23.500px; line-height: 28.300px; padding: 35px 0 0 35.500px; letter-spacing: -.03px; }
.c3 li::before { content: ""; float: left; width: 8px; height: 8px; border-radius: 50%; background: #000; margin: 11px 0 0 -22px; }
.credit { margin: 27px 0 0 12px; font-size: 12.200px; line-height: 15px; font-weight: 700; letter-spacing: .03px; }
.hscroll { display: block; width: 1130px; height: 8px; border-radius: 4px; background: #9a9bb1; margin: 84px 0 0 11px; }

/* inspect panel */
.right { width: 401px; border-left: 1px solid #444; display: flex; flex-direction: column; position: relative; overflow: hidden; }
.tabs { height: 51px; flex: none; border-bottom: 1px solid #444; display: flex; align-items: center; padding-left: 20px; gap: 20px; }
.tabs b { font-weight: 600; }
.tabs span, .otype, .devres p { color: #b3b3b3; }
.obj { height: 96px; flex: none; border-bottom: 1px solid #444; padding: 10px 20px 0 20px; }
.oname { height: 40px; display: flex; align-items: center; justify-content: space-between; font-size: 16.250px; }
.oname b { font-weight: 600; }
.otype { height: 30px; display: flex; align-items: center; gap: 7px; padding-left: 2px; }
.devres { height: 111px; flex: none; border-bottom: 1px solid #444; padding: 10px 0 0 20px; line-height: 20px; white-space: nowrap; }
.devres h4 { height: 40px; display: flex; align-items: center; justify-content: space-between; padding-right: 23px; }
.devres p { letter-spacing: .09px; }
.code { height: 559px; flex: none; padding: 10px 20px 0 20px; border-bottom: 1px solid #444; }
.chead { height: 40px; display: flex; align-items: center; margin-bottom: 10px; }
.chead b { font-weight: 600; width: 42px; }
.chead .ch { color: #888; }
.chead span { width: 35px; margin-left: 219px; font-weight: 500; }
.sld { margin-left: 28px; }
.boxm { height: 230px; background: #383838; border-radius: 2px; padding: 40px 0 0 40px; }
.border { width: 280px; height: 150px; border: 1px solid #444; background: #2c2c2c; padding: 29px 39px; position: relative; color: #b3b3b3; }
.inner { width: 200px; height: 90px; border: 1px solid #444; background: #383838; color: #6fd08c; text-align: center; line-height: 88px; }
.bl, .border i { position: absolute; line-height: 16px; }
.bl { left: 49px; top: 6px; }
.d1 { left: 17px; top: 9px; } .d2 { left: 136px; top: 6px; } .d3 { left: 255px; top: 9px; }
.d4 { left: 16px; top: 66px; } .d5 { left: 256px; top: 66px; }
.d6 { left: 17px; top: 124px; } .d7 { left: 136px; top: 126px; } .d8 { left: 255px; top: 124px; }
.bb { display: block; text-align: right; padding: 15px 10px 0 0; color: #808080; line-height: 17px; }
.code h4 { line-height: 20px; margin: 23px 0 12px; }
pre { font-family: "Roboto Mono", "Liberation Mono", monospace; font-size: 13.850px; line-height: 22.600px; color: #fff; }
pre i { color: #f89bec; }
pre u { text-decoration: none; color: #ffa94a; }
.blk { height: 88px; background: #383838; border-radius: 2px; padding: 10px; }
.code .st { margin: 17px 0 13px; }
.blk2 { height: 55px; background: #383838; border-radius: 2px; padding: 10px 0 0 10px; display: grid; grid-template-columns: 320px 30px; }
.blk2 pre { overflow: hidden; }
.blk2 svg { margin: 2px 0 0 6px; }
.sb { width: 215px; height: 7px; border-radius: 4px; background: #7a7a7a; margin: 11px 0 0 -7px; }
.assets { padding: 20px 0 0 20px; }
.assets h4 { line-height: 20px; }
.help { position: absolute; left: 340px; top: 788px; width: 40px; height: 40px; border-radius: 50%; background: #1e1e1e; display: flex; align-items: center; justify-content: center; }

/* browser side rail */
.edgebar { width: 54px; display: flex; flex-direction: column; align-items: center; margin-top: -27px; gap: 26.200px; }
.edgebar svg { width: 24px; height: 24px; }
.edgebar .add { margin-top: 2px; }
.edgebar i { width: 35px; height: 2px; background: #6c6c6c; margin: 279px 0 -11px; }

/* taskbar */
.taskbar { height: 38px; flex: none; background: #231b25; display: flex; align-items: center; font-size: 18px; }
.start { width: 18px; height: 18px; margin: 0 14px 0 13px; }
.srch { width: 323px; height: 38px; background: #333; border: 1px solid #5c5c5c; display: flex; align-items: center; padding-left: 14px; gap: 14px; color: #ddd; letter-spacing: -.2px; }
.tv { width: 20px; height: 20px; margin: 0 17px 0 12px; }
.app1 { width: 35px; height: 38px; border-bottom: 3px solid #b3afb4; display: flex; align-items: center; justify-content: center; margin-right: 11px; padding-right: 1px; }
.on { width: 45px; background: #4e4550; margin-right: 6px; }
.tray { margin-left: auto; display: flex; align-items: center; letter-spacing: -.3px; }
.sun { width: 30px; height: 28px; margin-right: 10px; }
.temp { width: 47px; } .haze { width: 64px; }
.tc { width: 16px; height: 10px; margin-right: 13px; }
.bat { width: 20px; height: 12px; margin-right: 12px; }
.wifi { width: 16px; height: 16px; margin-right: 10px; }
.vol { width: 21px; height: 18px; margin-right: 18px; }
.time { width: 80px; font-size: 15.500px; letter-spacing: -.75px; }
.act { width: 20px; height: 20px; margin-right: 25px; }
.pk { width: 1px; height: 38px; background: #777; margin-right: 5px; }
```
